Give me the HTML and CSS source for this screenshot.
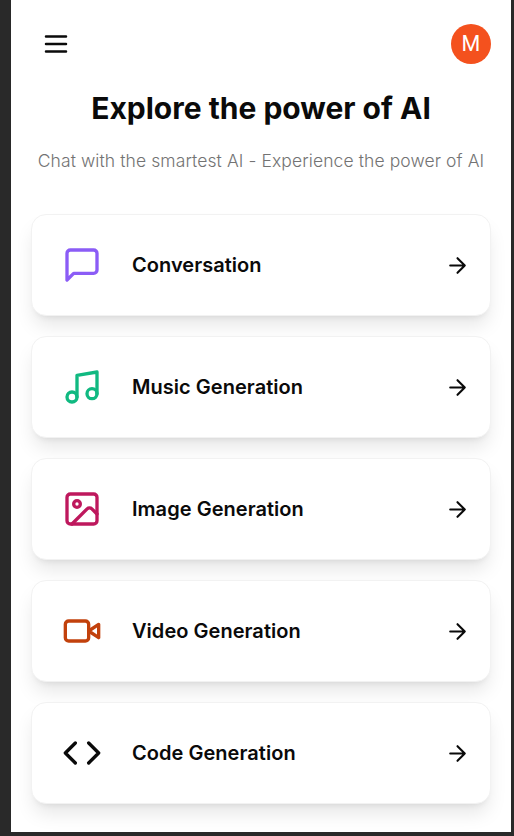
FILE: index.html
```html
<!DOCTYPE html>
<html lang="en">
<head>
<meta charset="utf-8">
<title>Explore the power of AI</title>
<link rel="stylesheet" href="styles.css">
</head>
<body>
<div class="page">
  <header class="navbar">
    <button class="menu" aria-label="Menu">
      <svg class="icon" viewBox="0 0 24 24"><path d="M4 12h16M4 6h16M4 18h16"/></svg>
    </button>
    <div class="avatar">M</div>
  </header>
  <main>
    <h1>Explore the power of AI</h1>
    <p class="subtitle">Chat with the smartest AI - Experience the power of AI</p>
    <div class="tools">
      <a class="card">
        <svg class="icon tool violet" viewBox="0 0 24 24"><path d="M21 15a2 2 0 0 1-2 2H7l-4 4V5a2 2 0 0 1 2-2h14a2 2 0 0 1 2 2z"/></svg>
        <span class="label">Conversation</span>
        <svg class="icon arrow" viewBox="0 0 24 24"><path d="M5 12h14M12 5l7 7-7 7"/></svg>
      </a>
      <a class="card">
        <svg class="icon tool emerald" viewBox="0 0 24 24"><path d="M9 18V5l12-2v13"/><circle cx="6" cy="18" r="3"/><circle cx="18" cy="16" r="3"/></svg>
        <span class="label">Music Generation</span>
        <svg class="icon arrow" viewBox="0 0 24 24"><path d="M5 12h14M12 5l7 7-7 7"/></svg>
      </a>
      <a class="card">
        <svg class="icon tool pink" viewBox="0 0 24 24"><rect x="3" y="3" width="18" height="18" rx="2"/><circle cx="9" cy="9" r="2"/><path d="m21 15-3.086-3.086a2 2 0 0 0-2.828 0L6 21"/></svg>
        <span class="label">Image Generation</span>
        <svg class="icon arrow" viewBox="0 0 24 24"><path d="M5 12h14M12 5l7 7-7 7"/></svg>
      </a>
      <a class="card">
        <svg class="icon tool orange" viewBox="0 0 24 24"><path d="m22 8-6 4 6 4V8Z"/><rect x="2" y="6" width="14" height="12" rx="2"/></svg>
        <span class="label">Video Generation</span>
        <svg class="icon arrow" viewBox="0 0 24 24"><path d="M5 12h14M12 5l7 7-7 7"/></svg>
      </a>
      <a class="card">
        <svg class="icon tool" viewBox="0 0 24 24"><path d="m16 18 6-6-6-6M8 6l-6 6 6 6"/></svg>
        <span class="label">Code Generation</span>
        <svg class="icon arrow" viewBox="0 0 24 24"><path d="M5 12h14M12 5l7 7-7 7"/></svg>
      </a>
    </div>
  </main>
</div>
</body>
</html>
```

FILE: styles.css
```css
* { box-sizing: border-box; }
body {
  margin: 0;
  height: 836px;
  padding: 0 3px 4px 11px;
  background: #292929;
  font-family: Inter, sans-serif;
  color: #0a0a0a;
  overflow: hidden;
}
.page {
  height: 832px;
  padding: 0 20px;
  background: #fff;
  overflow: hidden;
}
.navbar {
  display: flex;
  align-items: center;
  justify-content: space-between;
  height: 88px;
}
.menu {
  display: grid;
  place-items: center;
  width: 50px;
  height: 50px;
  padding: 0;
  border: 0;
  background: none;
  color: inherit;
}
.icon {
  display: block;
  flex: none;
  fill: none;
  stroke: currentColor;
  stroke-width: 2;
  stroke-linecap: round;
  stroke-linejoin: round;
}
.menu .icon { width: 30px; height: 30px; }
.avatar {
  width: 40px;
  height: 40px;
  border-radius: 50%;
  background: #f4511e;
  color: #fff;
  font: 400 21.5px/40px Roboto, sans-serif;
  text-align: center;
}
h1 {
  margin: 0;
  font-size: 30px;
  line-height: 40px;
  font-weight: 700;
  text-align: center;
}
.subtitle {
  margin: 20px 0 41px;
  font-size: 17.5px;
  line-height: 25px;
  font-weight: 300;
  letter-spacing: .09px;
  text-align: center;
  white-space: nowrap;
  color: #737373;
}
.tools {
  display: flex;
  flex-direction: column;
  gap: 20px;
}
.card {
  display: flex;
  align-items: center;
  height: 102px;
  padding: 0 20px 0 30px;
  border: 1px solid #f2f2f2;
  border-radius: 15px;
  background: #fff;
  box-shadow: 0 12.5px 18.75px -3.75px rgba(0, 0, 0, .1), 0 5px 7.5px -5px rgba(0, 0, 0, .1);
}
.tool { width: 40px; height: 40px; }
.label {
  flex: 1;
  margin-left: 30px;
  font-size: 20px;
  line-height: 30px;
  font-weight: 600;
  letter-spacing: .04px;
}
.arrow { width: 25px; height: 25px; }
.violet { color: #8b5cf6; }
.emerald { color: #10b981; }
.pink { color: #be185d; }
.orange { color: #c2410c; }
```
